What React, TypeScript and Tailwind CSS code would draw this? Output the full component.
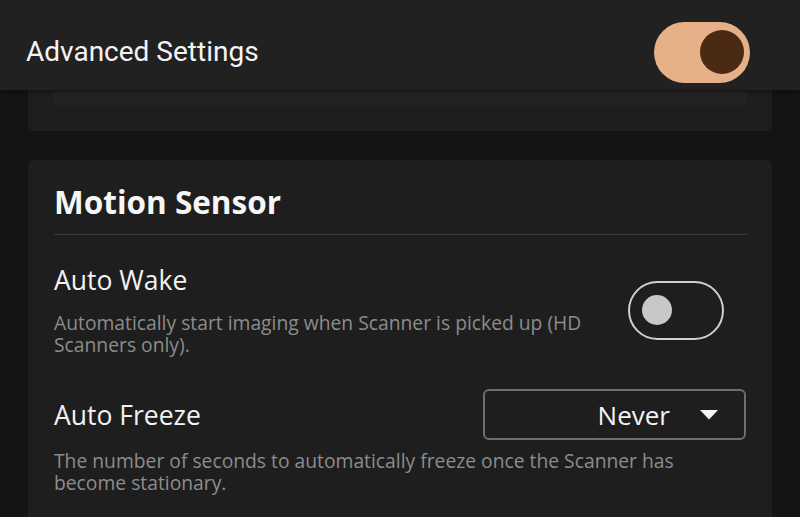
import React from "react";

export default function App() {
  return (
    <div className="relative w-[800px] h-[517px] overflow-hidden bg-[#141414] font-['Open_Sans',sans-serif]">
      <header className="relative z-10 h-[90px] bg-[#212121] flex items-center justify-between pt-[14px] pl-[26px] pr-[50px] shadow-[0_2px_4px_rgba(0,0,0,0.35)]">
        <span className="font-['Roboto',sans-serif] text-[28px] leading-[36px] text-[#f4f4f4]">Advanced Settings</span>
        <div className="w-[96px] h-[61px] rounded-full bg-[#e6b089] flex items-center justify-end pr-[6px]">
          <div className="w-[44px] h-[44px] rounded-full bg-[#4b2a14]" />
        </div>
      </header>

      <div className="px-[28px]">
        <div className="h-[41px] bg-[#1e1e1e] rounded-b-md px-[25px]">
          <div className="h-[15px] bg-[#232323] rounded-b-sm" />
        </div>

        <div className="mt-[29px] bg-[#1e1e1e] rounded-md pl-[26px] pr-[25px] pt-[24px] pb-[40px]">
          <h2 className="text-[31.5px] leading-[36px] font-bold text-[#f6f6f6]">Motion Sensor</h2>
          <div className="mt-[14px] h-px bg-[#3a3a3a]" />

          <div className="mt-[29px] flex items-center justify-between">
            <div className="w-[560px] flex flex-col">
              <span className="text-[26.5px] leading-[32px] text-[#f2f2f2]">Auto Wake</span>
              <p className="mt-[16px] text-[19.3px] leading-[22px] text-[#8c8c8c]">
                Automatically start imaging when Scanner is picked up (HD Scanners only).
              </p>
            </div>
            <div className="mr-[23px] w-[96px] h-[59px] rounded-full border-[2.5px] border-[#d0d0d0] flex items-center pl-[12px]">
              <div className="w-[30px] h-[30px] rounded-full bg-[#c8c8c8]" />
            </div>
          </div>

          <div className="mt-[33px] flex items-center justify-between">
            <span className="text-[26.5px] leading-[32px] text-[#f2f2f2]">Auto Freeze</span>
            <div className="mr-[1px] w-[263px] h-[51px] rounded-md border-2 border-[#6e6e6e] flex items-center justify-end pr-[26px] gap-[30px]">
              <span className="text-[26px] leading-[32px] text-[#f4f4f4]">Never</span>
              <svg width="18" height="10" viewBox="0 0 18 10">
                <polygon points="0,0 18,0 9,9.5" fill="#f4f4f4" />
              </svg>
            </div>
          </div>
          <p className="mt-[10px] w-[660px] text-[19.3px] leading-[22px] text-[#8c8c8c]">
            The number of seconds to automatically freeze once the Scanner has become stationary.
          </p>
        </div>
      </div>
    </div>
  );
}
